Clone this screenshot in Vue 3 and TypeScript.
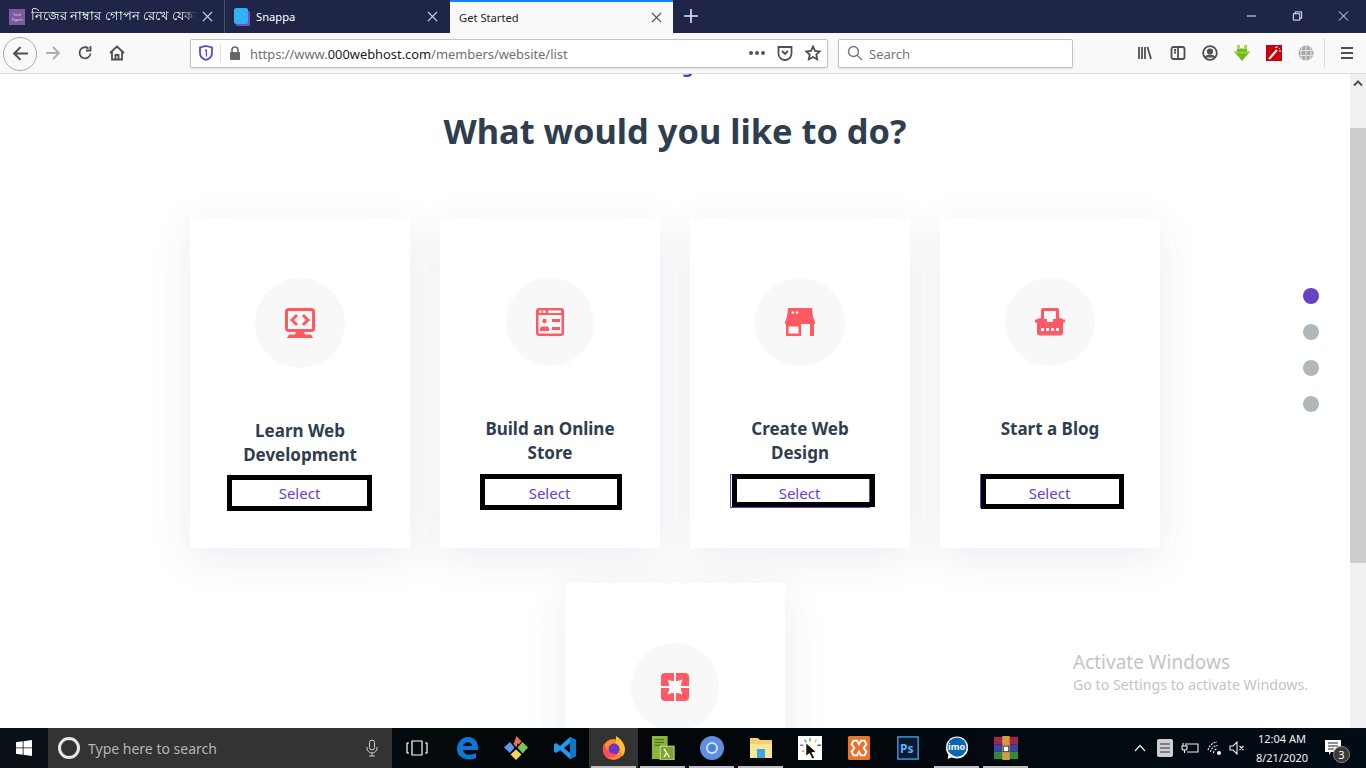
<template>
  <div class="screen">
    <!-- Browser tabs -->
    <div class="tabbar">
      <div class="tab">
        <span class="favicon-tt">Tech<br />Tigers</span>
        <span class="tab__title tab__title--clip">নিজের নাম্বার গোপন রেখে যেকা</span>
        <svg class="tab__close" viewBox="0 0 12 12"><path d="M1 1l10 10M11 1L1 11" /></svg>
      </div>
      <div class="tab tab--divided">
        <svg class="favicon" viewBox="0 0 16 18">
          <rect x="2" y="3" width="14" height="15" rx="1.5" fill="#7c4dc4" />
          <rect x="0" y="0" width="14" height="16" rx="2" fill="#2fb2f3" />
        </svg>
        <span class="tab__title">Snappa</span>
        <svg class="tab__close" viewBox="0 0 12 12"><path d="M1 1l10 10M11 1L1 11" /></svg>
      </div>
      <div class="tab tab--active">
        <span class="tab__title">Get Started</span>
        <svg class="tab__close" viewBox="0 0 12 12"><path d="M1 1l10 10M11 1L1 11" /></svg>
      </div>
      <svg class="newtab" viewBox="0 0 14 14"><path d="M7 0v14M0 7h14" /></svg>
      <div class="spacer" />
      <div class="winbtns">
        <svg viewBox="0 0 12 12"><path d="M1 6h10" /></svg>
        <svg viewBox="0 0 12 12"><path d="M1.5 3.5h7v7h-7zM3.500 3.500v-2h7v7h-2" /></svg>
        <svg viewBox="0 0 12 12"><path d="M1 1l10 10M11 1L1 11" /></svg>
      </div>
    </div>

    <!-- Toolbar -->
    <div class="toolbar">
      <div class="backbtn">
        <svg viewBox="0 0 16 16" class="ticon ticon--back"><path d="M15 8H2M8 2L2 8l6 6" /></svg>
      </div>
      <svg viewBox="0 0 16 16" class="ticon ticon--fwd"><path d="M1 8h13M8 2l6 6-6 6" /></svg>
      <svg viewBox="0 0 16 16" class="ticon ticon--reload"><path d="M13.500 8.500A5.500 5.500 0 1 1 11.500 3.500M13.500 1v4.500H9" /></svg>
      <svg viewBox="0 0 16 16" class="ticon ticon--home"><path d="M1 8l7-6.500L15 8M3 6.500V14.500h10V6.500M6.500 14.500V10h3v4.500" /></svg>

      <div class="urlbar">
        <svg class="shield" viewBox="0 0 14 16"><path d="M7 1l6 1.500V8c0 3.500-3 6-6 7-3-1-6-3.500-6-7V2.500z" fill="none" stroke="#4a4ad8" stroke-width="1.800" /><path d="M6 4.500h2v7H6.800V6H6z" fill="#4a4ad8" /></svg>
        <span class="urlbar__sep" />
        <svg class="lock" viewBox="0 0 12 14"><path d="M3 6V4a3 3 0 0 1 6 0v2" fill="none" stroke="#666" stroke-width="1.600" /><rect x="1" y="6" width="10" height="8" rx="1" fill="#666" /></svg>
        <span class="url">https://www.<b>000webhost.com</b>/members/website/list</span>
        <span class="spacer" />
        <span class="urlbar__dots"><i /><i /><i /></span>
        <svg class="ticon ticon--pocket" viewBox="0 0 16 16"><path d="M1.500 2h13v6.500a6.500 6.500 0 0 1-13 0zM5 6l3 3 3-3" /></svg>
        <svg class="ticon ticon--star" viewBox="0 0 16 16"><path d="M8 1.500l2 4.300 4.700.6-3.400 3.200.9 4.700L8 12l-4.200 2.300.9-4.700L1.300 6.400 6 5.800z" /></svg>
      </div>

      <div class="searchbar">
        <svg class="ticon ticon--search" viewBox="0 0 16 16"><circle cx="6.500" cy="6.500" r="5" /><path d="M10.200 10.200L15 15" /></svg>
        <span class="searchbar__text">Search</span>
      </div>

      <div class="spacer" />

      <div class="tools">
        <svg class="ticon" viewBox="0 0 16 16"><path d="M2 2v12M5 2v12M8 2v12M10.500 2l3.500 12" /></svg>
        <svg class="ticon" viewBox="0 0 16 16"><rect x="1.500" y="2" width="13" height="12" rx="2" /><path d="M8 2v12M4 5h2M4 7.500h2" /></svg>
        <svg class="ticon" viewBox="0 0 16 16"><circle cx="8" cy="8" r="6.800" /><circle cx="8" cy="6.500" r="2.200" fill="#555" /><path d="M3.500 12.500c1-2.500 8-2.500 9 0" fill="#555" /></svg>
        <svg class="tool-solid" viewBox="0 0 16 16">
          <path d="M3 0h3v3H3zM10 0h3v3h-3z" fill="#a5dc4a" />
          <path d="M3 3.500h10v3h3L8 16 0 6.500h3z" fill="#72b81c" />
          <path d="M0 6.500h16L14.500 8.500h-13z" fill="#93d334" />
        </svg>
        <svg class="tool-solid" viewBox="0 0 16 16"><rect width="16" height="16" fill="#c8000c" /><path d="M3 14L11 5" stroke="#fff" stroke-width="2" /><path d="M11 1v2M14 3l-1 1M15 6h-2M9 2l1 1" stroke="#fff" /></svg>
        <svg class="tool-solid" viewBox="0 0 16 16"><circle cx="8" cy="8" r="7.500" fill="#aaa" /><path d="M0 5.500h16M0 10.500h16M8 0v16M4.500 1c-2 4-2 10 0 14M11.500 1c2 4 2 10 0 14" stroke="#e4e4e4" fill="none" /></svg>
        <span class="tools__sep" />
        <svg class="ticon ticon--menu" viewBox="0 0 16 16"><path d="M2 3h12M2 8h12M2 13h12" /></svg>
      </div>
    </div>

    <!-- Page -->
    <div class="viewport">
      <div class="page">
        <span class="page__clipped">g</span>
        <h1 class="heading">What would you like to do?</h1>
        <div class="cards">
          <div
            v-for="card in cards"
            :key="card.icon"
            class="card"
            :class="{ 'card--tall': card.tall }"
          >
            <div class="circle" :class="`circle--${card.circle}`">
              <svg v-if="card.icon === 'code'" class="icon" viewBox="0 0 30 30">
                <rect x="1.500" y="1.500" width="27" height="21" rx="2" fill="none" stroke="#ff5a64" stroke-width="3" />
                <path d="M12 7L7 12l5 5M18 7l5 5-5 5" fill="none" stroke="#ff5a64" stroke-width="3" />
                <path d="M11 24h8l1 2.500h6l2 3.500H2l2-3.500h6z" fill="#ff5a64" />
              </svg>
              <svg v-else-if="card.icon === 'store'" class="icon icon--sm" viewBox="0 0 28 28">
                <rect x="0" y="0" width="28" height="28" rx="3" fill="#ff5a64" />
                <rect x="2.500" y="7" width="23" height="18.500" fill="#f8f8f8" />
                <path d="M3 2.500h2.500V5H3zM7 2.500h2.500V5H7zM12 2.500h13V5H12z" fill="#fff" />
                <circle cx="8.500" cy="13" r="2.200" fill="#ff5a64" />
                <path d="M4 23v-2.500c0-1 1-2 2-2h5c1 0 2 1 2 2V23zM16 11h8v3h-8zM16 19h8v3h-8z" fill="#ff5a64" />
              </svg>
              <svg v-else-if="card.icon === 'shop'" class="icon" viewBox="0 0 30 28">
                <path d="M3 0h24l1 9 2 5v2H0v-2l2-5z" fill="#ff5a64" />
                <circle cx="8" cy="4.500" r="1.300" fill="#fff" />
                <circle cx="12" cy="4.500" r="1.300" fill="#fff" />
                <path d="M1 16h15v12H1zM3.500 18.500v7h10v-7z" fill="#ff5a64" />
                <path d="M25 16h4v12h-4z" fill="#ff5a64" />
              </svg>
              <svg v-else-if="card.icon === 'typewriter'" class="icon" viewBox="0 0 30 28">
                <path d="M8 0h14a2 2 0 0 1 2 2v8l3 .500 1 1h2v3h-2v10a3 3 0 0 1-3 3H5a3 3 0 0 1-3-3V14.500H0v-3h2l1-1 3-.500V2a2 2 0 0 1 2-2z" fill="#ff5a64" />
                <path d="M9 3h12v8h-3v3h-6v-3H9z" fill="#f8f8f8" />
                <path d="M6 20h3v3H6zM11 20h3v3h-3zM16 20h3v3h-3zM21 20h3v3h-3z" fill="#fff" />
              </svg>
              <svg v-else class="icon icon--sm" viewBox="0 0 28 28">
                <rect width="28" height="28" rx="4" fill="#ff5a64" />
                <path d="M6.500 6.500Q14 10 21.500 6.500 18 14 21.500 21.500 14 18 6.500 21.500 10 14 6.500 6.500z" fill="#fff" />
                <path d="M13 0h2v28h-2zM0 13h28v2H0z" fill="#fff" />
              </svg>
            </div>
            <template v-if="card.title">
              <h3 class="card__title">{{ card.title }}</h3>
              <div class="select">
                Select
                <span class="select__frame" :class="`select__frame--${card.frame}`" />
              </div>
            </template>
          </div>
        </div>
      </div>

      <!-- Slide dots -->
      <div class="dots">
        <span class="dot dot--on" />
        <span class="dot" />
        <span class="dot" />
        <span class="dot" />
      </div>

      <!-- Windows watermark -->
      <div class="watermark">
        <div class="watermark__big">Activate Windows</div>
        <div class="watermark__small">Go to Settings to activate Windows.</div>
      </div>

      <div class="scrollbar">
        <div class="scrollbar__up">
          <svg viewBox="0 0 10 8"><path d="M1 6.500L5 2.500l4 4" /></svg>
        </div>
        <div class="scrollbar__thumb" />
        <div class="scrollbar__rest" />
      </div>
    </div>

    <!-- Windows taskbar -->
    <div class="taskbar">
      <div class="start">
        <svg viewBox="0 0 16 16"><path d="M0 2.300L6.700 1.300V7.500H0zM7.500 1.200L16 0v7.500H7.500zM0 8.300h6.700v6.400L0 13.700zM7.500 8.300H16V16l-8.500-1.200z" fill="#fff" /></svg>
      </div>
      <div class="tsearch">
        <span class="cortana" />
        <span class="tsearch__text">Type here to search</span>
        <svg class="mic" viewBox="0 0 12 18"><rect x="3.500" y="1" width="5" height="10" rx="2.500" /><path d="M1 8v1a5 5 0 0 0 10 0V8M6 14v3M3 17h6" /></svg>
      </div>
      <div class="slot slot--first">
        <svg class="taskview" viewBox="0 0 22 16"><path d="M6 1h10v14H6zM3 3H1v10h2M19 3h2v10h-2" /></svg>
      </div>
      <div class="slot slot--edge">
        <svg viewBox="0 0 24 24"><path d="M2 13C2 6 7 1 13 1c6 0 10 4 10 11v2H8c0 5 8 6 13 3v5c-7 3-19 1-19-9zM8 10h9c0-5-8-5-9 0z" fill="#0a78d7" /></svg>
      </div>
      <div class="slot">
        <svg viewBox="0 0 24 24">
          <path d="M12.500 0l5 5.500-3 3-1.500-1.500V10l-1 1-2.500-3z" fill="#f0695f" />
          <path d="M6 6l4.500 5.500L6 17l-6-5.500z" fill="#5b9be8" />
          <path d="M18.500 6l5.500 5.500-5.500 6-5-6z" fill="#7fc35a" />
          <path d="M12 13.500l5.500 5-5.500 5.500-5.500-5.500z" fill="#f3d35c" />
        </svg>
      </div>
      <div class="slot">
        <svg viewBox="0 0 24 24">
          <path d="M17 1l6 3v16l-6 3L7 14l-4 3-2-1.500V8.500L3 7l4 3z" fill="#1f9cf0" />
          <path d="M17 7v10l-6-5z" fill="#04060a" />
          <path d="M17 1l6 3v16l-6 3z" fill="#0b79c7" />
        </svg>
      </div>
      <div class="slot slot--active slot--run">
        <svg viewBox="0 0 24 24">
          <circle cx="11.500" cy="13.500" r="10.500" fill="#ff8a2c" />
          <path d="M14 0c5 3 9 8 9 13 0 3-1 6-3 7.500 0-6-3-10-6-11z" fill="#ffc02e" />
          <circle cx="12" cy="13" r="5.500" fill="#6a36c9" />
          <path d="M2 7c1 6 5 11 13 11-3 5-10 5-13 0-2-3-1-8 0-11z" fill="#ff4a58" />
        </svg>
      </div>
      <div class="slot slot--run">
        <svg viewBox="0 0 26 26">
          <rect x="1" y="0" width="17" height="25" fill="#8db33a" />
          <path d="M4 4h10M4 7h10M4 10h7" stroke="#3f5d12" />
          <rect x="10" y="11" width="15" height="15" fill="#7ca62f" stroke="#cfe39a" />
          <path d="M14 14l6 9M17 18l-3 5" stroke="#fff" fill="none" stroke-width="1.300" />
        </svg>
      </div>
      <div class="slot slot--run">
        <svg viewBox="0 0 24 24">
          <circle cx="12" cy="12" r="12" fill="#5e8fe0" />
          <circle cx="12" cy="12" r="6" fill="#cfe0fa" />
          <circle cx="12" cy="12" r="4" fill="#4d82d8" />
        </svg>
      </div>
      <div class="slot slot--run">
        <svg viewBox="0 0 24 22">
          <path d="M1 1h8l2 2h12v18H1z" fill="#f5cf6b" />
          <path d="M1 7h22v14H1z" fill="#fbe39a" />
          <path d="M8 12h8v9H8z" fill="#37a7e0" />
        </svg>
      </div>
      <div class="slot">
        <svg viewBox="0 0 26 26">
          <rect width="26" height="26" fill="#fff" />
          <path d="M9 8l10 9-4.500.500 3 6-2 1-3-6L9 21z" fill="#111" />
          <path d="M13 2v4M7 4l2 3" stroke="#59b25a" stroke-width="1.500" />
          <path d="M20 4l-2 3" stroke="#e8c23a" stroke-width="1.500" />
          <path d="M2 10h4" stroke="#e23ad0" stroke-width="1.500" />
          <path d="M21 10h4" stroke="#2a52d8" stroke-width="1.500" />
          <path d="M4 17l3-1" stroke="#e0a52a" stroke-width="1.500" />
        </svg>
      </div>
      <div class="slot">
        <svg viewBox="0 0 24 26">
          <rect width="24" height="26" rx="2" fill="#e8742c" />
          <path d="M6 5h4l2 4 2-4h4l2 4-3 4 3 4-2 4h-4l-2-4-2 4H6l-2-4 3-4-3-4z" fill="none" stroke="#fff" stroke-width="2" />
        </svg>
      </div>
      <div class="slot">
        <svg viewBox="0 0 24 26">
          <rect x="1" y="1" width="22" height="24" fill="#0a1a36" stroke="#4a9be0" stroke-width="1.500" />
        </svg>
        <span class="ps">Ps</span>
      </div>
      <div class="slot slot--run">
        <svg viewBox="0 0 26 26">
          <circle cx="13" cy="12.500" r="12" fill="#fff" />
          <circle cx="13" cy="12" r="10.500" fill="#0d62b5" />
          <path d="M4 18l-1 7 7-3z" fill="#fff" />
        </svg>
        <span class="imo">imo</span>
      </div>
      <div class="slot slot--run">
        <svg viewBox="0 0 26 26">
          <rect x="0" y="1" width="26" height="8" fill="#a8234a" />
          <rect x="0" y="9" width="26" height="8" fill="#3a44a8" />
          <rect x="0" y="17" width="26" height="8" fill="#2f8a3c" />
          <rect x="9" y="0" width="8" height="26" fill="#d89a3a" />
          <rect x="10" y="11" width="6" height="6" fill="#fff" stroke="#333" />
        </svg>
      </div>
      <div class="spacer" />
      <div class="tray">
        <span class="tray__item">
          <svg class="tray__chev" viewBox="0 0 12 8"><path d="M1 7l5-5.500L11 7" /></svg>
        </span>
        <span class="tray__item">
          <svg class="tray__mixer" viewBox="0 0 16 18">
            <rect width="16" height="18" rx="2" fill="#cfcfcf" />
            <path d="M3 5h10M3 9h10M3 13h10" stroke="#333" />
          </svg>
        </span>
        <span class="tray__item">
          <svg class="tray__line tray__power" viewBox="0 0 18 14"><path d="M6 3h11v8H6M2 2v3M5 2v3M1 5h5v2a2 2 0 0 1-2 2H3a2 2 0 0 1-2-2zM3.500 9v3" /></svg>
        </span>
        <span class="tray__item">
          <svg class="tray__line" viewBox="0 0 16 16"><path d="M1 10a11 11 0 0 1 9-8M3.500 12a7.500 7.500 0 0 1 7-6.500M6.500 13a4 4 0 0 1 4-4" stroke-dasharray="2 1" /><circle cx="12" cy="13" r="1.500" fill="#fff" /></svg>
        </span>
        <span class="tray__item tray__item--mute">
          <svg class="tray__line" viewBox="0 0 16 16"><path d="M1 6h3l4-4v12l-4-4H1zM10.500 6l4 4M14.500 6l-4 4" /></svg>
        </span>
      </div>
      <div class="clock">
        <div>12:04 AM</div>
        <div>8/21/2020</div>
      </div>
      <div class="notify">
        <svg viewBox="0 0 16 16"><path d="M0 0h16v12H6l-2 3v-3H0z" fill="#fff" /><path d="M3 3h10M3 6h10M3 9h6" stroke="#222" /></svg>
        <span class="notify__count">3</span>
      </div>
    </div>
  </div>
</template>

<script setup lang="ts">
interface Card {
  title?: string
  icon: string
  circle: string
  tall?: boolean
  frame?: string
}

const cards: Card[] = [
  { title: 'Learn Web Development', icon: 'code', circle: 'full', tall: true, frame: 'a' },
  { title: 'Build an Online Store', icon: 'store', circle: 'small', frame: 'b' },
  { title: 'Create Web Design', icon: 'shop', circle: 'wide', frame: 'c' },
  { title: 'Start a Blog', icon: 'typewriter', circle: 'wide', frame: 'd' },
  { icon: 'help', circle: 'small' },
]
</script>

<style>
html,
body {
  margin: 0;
  overflow: hidden;
}
</style>

<style scoped>
.screen {
  width: 1366px;
  height: 768px;
  display: flex;
  flex-direction: column;
  overflow: hidden;
  font-family: "Noto Sans", "Noto Sans CJK SC", sans-serif;
  background: #fff;
}

.spacer {
  flex: 1;
}

/* Tabs */
.tabbar {
  height: 33px;
  flex-shrink: 0;
  display: flex;
  align-items: stretch;
  background: #1f2546;
  color: #fff;
}

.tab {
  width: 224px;
  display: flex;
  align-items: center;
  padding: 0 9px;
  box-sizing: border-box;
  font-size: 11.200px;
}

.tab--divided {
  border-left: 1px solid #4a4f6c;
  width: 225px;
}

.tab--active {
  margin-left: 1px;
  width: 223px;
  background: #f9f9fa;
  color: #222;
  border-top: 2px solid #0a84ff;
}

.favicon-tt {
  width: 16px;
  height: 16px;
  margin-right: 6px;
  flex-shrink: 0;
  background: #7d5a9c;
  color: #e6d9ee;
  font-size: 4px;
  line-height: 5px;
  text-align: center;
  padding-top: 3px;
  box-sizing: border-box;
}

.favicon {
  width: 16px;
  height: 18px;
  margin-right: 6px;
  flex-shrink: 0;
}

.tab__title {
  flex: 1;
  white-space: nowrap;
  overflow: hidden;
}

.tab__title--clip {
  font-size: 12.600px;
  -webkit-mask-image: linear-gradient(90deg, #000 92%, transparent);
  mask-image: linear-gradient(90deg, #000 92%, transparent);
}

.tab__close {
  width: 11px;
  height: 11px;
  margin-left: 6px;
  margin-right: 2px;
  flex-shrink: 0;
  fill: none;
  stroke: currentColor;
  stroke-width: 1.400;
  opacity: 0.8;
}

.newtab {
  width: 14px;
  height: 14px;
  margin: 9px 0 0 11px;
  fill: none;
  stroke: #e6e7ec;
  stroke-width: 1.600;
}

.winbtns {
  display: flex;
  gap: 35px;
  padding: 10px 17px 0 0;
  height: 12px;
}

.winbtns svg {
  width: 11px;
  height: 12px;
  fill: none;
  stroke: #fff;
  stroke-width: 1;
}

/* Toolbar */
.toolbar {
  height: 40px;
  flex-shrink: 0;
  display: flex;
  align-items: center;
  background: #f9f9fa;
  border-bottom: 1px solid #dcdcde;
  box-sizing: content-box;
}

.ticon {
  width: 16px;
  height: 16px;
  fill: none;
  stroke: #4f4f52;
  stroke-width: 1.800;
  flex-shrink: 0;
}

.backbtn {
  width: 34px;
  height: 34px;
  margin: 1px 0 0 3px;
  border: 1px solid #a8a8aa;
  border-radius: 50%;
  box-sizing: border-box;
  display: flex;
  align-items: center;
  justify-content: center;
}

.ticon--back {
  width: 17px;
  height: 17px;
  stroke-width: 1.900;
}

.ticon--fwd {
  margin-left: 8px;
  stroke: #aeaeb0;
}

.ticon--reload {
  margin-left: 16px;
}

.ticon--home {
  margin-left: 16px;
}

.urlbar {
  width: 638px;
  height: 29px;
  margin-left: 65px;
  box-sizing: border-box;
  display: flex;
  align-items: center;
  background: #fff;
  border: 1px solid #c3c3c5;
  border-radius: 2px;
  box-shadow: 0 1px 2px rgba(0, 0, 0, 0.1);
  padding: 0 6px 0 8px;
}

.shield {
  width: 14px;
  height: 16px;
}

.urlbar__sep {
  width: 1px;
  height: 18px;
  background: #e0e0e2;
  margin: 0 8px 0 7px;
}

.lock {
  width: 12px;
  height: 14px;
  margin-right: 9px;
}

.url {
  font-size: 12.880px;
  padding-top: 1px;
  color: #6f6f72;
  white-space: nowrap;
}

.url b {
  font-weight: 400;
  color: #1a1a1c;
}

.urlbar__dots {
  display: flex;
  gap: 2px;
  margin-right: 12px;
}

.urlbar__dots i {
  width: 4px;
  height: 4px;
  border-radius: 50%;
  background: #555;
}

.ticon--pocket {
  margin-right: 12px;
}

.ticon--star {
  margin-right: 0;
}

.searchbar {
  width: 235px;
  height: 29px;
  margin-left: 10px;
  box-sizing: border-box;
  display: flex;
  align-items: center;
  gap: 6px;
  padding-left: 8px;
  background: #fff;
  border: 1px solid #c3c3c5;
  border-radius: 2px;
  box-shadow: 0 1px 2px rgba(0, 0, 0, 0.1);
  font-size: 13px;
  color: #76767a;
}

.searchbar__text {
  padding-top: 1px;
}

.ticon--search {
  stroke: #76767a;
  stroke-width: 1.400;
}

.tools {
  display: flex;
  align-items: center;
  gap: 16px;
  padding-right: 11px;
}

.tools .ticon:first-child {
  margin-right: 1px;
}

.tool-solid {
  width: 16px;
  height: 16px;
  flex-shrink: 0;
}

.tools__sep {
  width: 1px;
  height: 30px;
  background: #dcdcde;
  margin: 0 -2px 0 -6px;
}

/* Page */
.viewport {
  flex: 1;
  min-height: 0;
  position: relative;
  overflow: hidden;
  background: #fff;
}

.page {
  width: 1350px;
  position: relative;
  padding-top: 33px;
}

.page__clipped {
  position: absolute;
  left: 682px;
  top: -20px;
  font-size: 18px;
  font-weight: 700;
  color: #5a34c4;
}

.heading {
  margin: 0;
  text-align: center;
  font-size: 34.400px;
  line-height: 48px;
  font-weight: 700;
  color: #2f3e4e;
}

.cards {
  width: 970px;
  margin: 63px auto 0;
  display: flex;
  flex-wrap: wrap;
  justify-content: center;
  gap: 35px 30px;
}

.card {
  width: 220px;
  height: 330px;
  padding-top: 60px;
  box-sizing: border-box;
  display: flex;
  flex-direction: column;
  align-items: center;
  background: #fff;
  box-shadow: 0 10px 40px rgba(50, 60, 120, 0.09);
}

.circle {
  background: #f8f8f8;
  border-radius: 50%;
  display: flex;
  align-items: center;
  justify-content: center;
  flex-shrink: 0;
}

.circle--full {
  width: 90px;
  height: 90px;
}

.circle--small {
  width: 88px;
  height: 88px;
}

.circle--wide {
  width: 90px;
  height: 88px;
}

.icon {
  width: 30px;
  height: 30px;
  display: block;
}

.icon--sm {
  width: 28px;
  height: 28px;
}

.card__title {
  margin: 51px 0 0;
  width: 150px;
  min-height: 48px;
  text-align: center;
  font-size: 17px;
  line-height: 24px;
  font-weight: 700;
  color: #2f3e4e;
}

.select {
  position: relative;
  width: 140px;
  height: 34px;
  margin-top: 9px;
  padding: 8px 1px 0 0;
  box-sizing: border-box;
  line-height: 20px;
  text-align: center;
  font-size: 15px;
  color: #6741c6;
  border: 1px solid #6741c6;
}

.card--tall .select {
  margin-top: 7px;
  border-top-color: transparent;
}

.select__frame {
  position: absolute;
  border: 5px solid #000;
  box-sizing: border-box;
}

.select__frame--a {
  inset: 0 -3px -4px -4px;
}

.select__frame--b {
  inset: -1px -3px -3px -1px;
}

.select__frame--c {
  inset: -1px -6px 0 1px;
}

.select__frame--d {
  inset: -1px -5px -2px 0;
}

/* Slide dots */
.dots {
  position: absolute;
  left: 1303px;
  top: 214px;
  display: flex;
  flex-direction: column;
  gap: 20px;
}

.dot {
  width: 16px;
  height: 16px;
  border-radius: 50%;
  background: #b0b8bb;
}

.dot--on {
  background: #6741c6;
}

.watermark {
  position: absolute;
  left: 1073px;
  top: 575px;
  color: #c4c4c4;
  white-space: nowrap;
}

.watermark__big {
  font-size: 19px;
  line-height: 26px;
}

.watermark__small {
  font-size: 14.200px;
  line-height: 20px;
}

.scrollbar {
  position: absolute;
  right: 0;
  top: 0;
  bottom: 0;
  width: 16px;
  display: flex;
  flex-direction: column;
  background: #f0f0f0;
}

.scrollbar__up {
  height: 54px;
  padding-top: 5px;
  box-sizing: border-box;
  display: flex;
  justify-content: center;
}

.scrollbar__up svg {
  width: 10px;
  height: 8px;
  fill: none;
  stroke: #505050;
  stroke-width: 2;
}

.scrollbar__thumb {
  height: 435px;
  background: #cdcdcd;
}

/* Taskbar */
.taskbar {
  height: 40px;
  flex-shrink: 0;
  display: flex;
  align-items: center;
  background: linear-gradient(100deg, #0a1218 0%, #030608 45%, #020c16 100%);
  color: #fff;
}

.start {
  width: 48px;
  height: 40px;
  display: flex;
  align-items: center;
  justify-content: center;
}

.start svg {
  width: 16px;
  height: 16px;
}

.tsearch {
  width: 344px;
  height: 40px;
  box-sizing: border-box;
  display: flex;
  align-items: center;
  padding: 0 14px 0 10px;
  background: #333;
  color: #b4b4b4;
  font-size: 14px;
}

.cortana {
  width: 22px;
  height: 22px;
  box-sizing: border-box;
  border: 3px solid #e8e8e8;
  border-radius: 50%;
  margin-right: 8px;
}

.tsearch__text {
  flex: 1;
}

.mic {
  width: 12px;
  height: 18px;
  fill: none;
  stroke: #cfcfcf;
}

.slot {
  position: relative;
  width: 49px;
  height: 40px;
  display: flex;
  align-items: center;
  justify-content: center;
  flex-shrink: 0;
}

.slot--first {
  width: 50px;
}

.slot svg {
  width: 24px;
  height: 24px;
}

.slot .taskview {
  width: 22px;
  height: 16px;
  fill: none;
  stroke: #fff;
  stroke-width: 1.200;
}

.slot--active {
  background: #333;
}

.slot--run::after {
  content: "";
  position: absolute;
  left: 2px;
  right: 2px;
  bottom: 0;
  height: 2px;
  background: #bfbfbf;
}

.ps {
  position: absolute;
  left: 17px;
  top: 12px;
  font-size: 12px;
  font-weight: 700;
  color: #5fb3f0;
}

.imo {
  position: absolute;
  left: 0;
  right: 0;
  top: 12px;
  text-align: center;
  font-size: 9px;
  font-weight: 700;
  color: #fff;
}

.tray {
  display: flex;
  align-items: center;
}

.tray__item {
  width: 25px;
  display: flex;
  align-items: center;
  justify-content: center;
}

.tray__item--mute {
  margin-left: -3px;
}

.tray__chev {
  width: 12px;
  height: 8px;
  fill: none;
  stroke: #eee;
  stroke-width: 1.200;
}

.tray__mixer {
  width: 16px;
  height: 18px;
}

.tray__line {
  fill: none;
  stroke: #eee;
  stroke-width: 1.100;
  width: 16px;
  height: 16px;
}

.tray__power {
  width: 18px;
  height: 14px;
}

.clock {
  width: 66px;
  text-align: center;
  font-size: 11px;
  line-height: 19px;
  color: #f2f2f2;
}

.notify {
  position: relative;
  width: 40px;
  height: 40px;
  margin: 0 13px 0 -2px;
  display: flex;
  align-items: center;
  justify-content: center;
}

.notify svg {
  width: 16px;
  height: 16px;
}

.notify__count {
  position: absolute;
  left: 20px;
  top: 18px;
  width: 17px;
  height: 17px;
  border-radius: 50%;
  background: #3a3a3a;
  border: 1px solid #888;
  box-sizing: border-box;
  font-size: 11px;
  line-height: 15px;
  text-align: center;
  color: #fff;
}
</style>
